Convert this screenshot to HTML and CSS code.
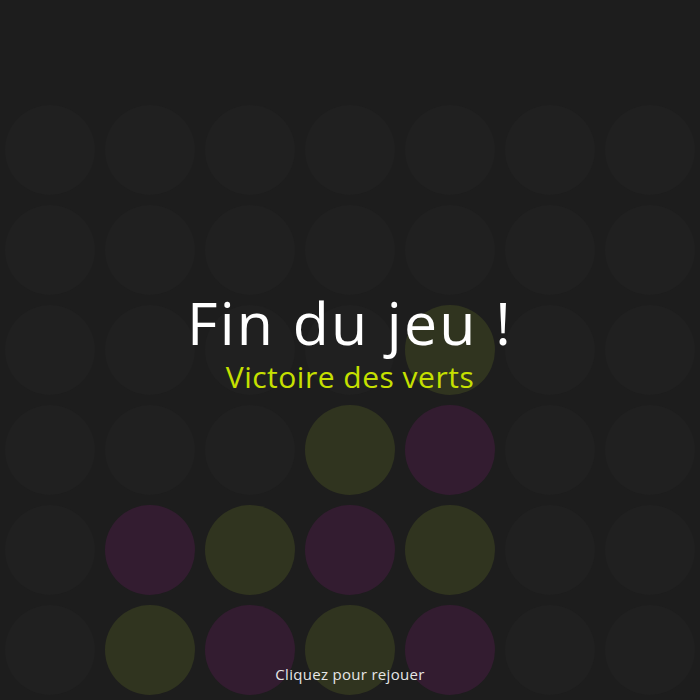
FILE: index.html
```html
<!DOCTYPE html>
<html lang="fr">
<head>
<meta charset="utf-8">
<title>Puissance 4</title>
<link rel="stylesheet" href="styles.css">
</head>
<body>
<div class="screen">
  <div class="board">
    <div class="cell"></div><div class="cell"></div><div class="cell"></div><div class="cell"></div><div class="cell"></div><div class="cell"></div><div class="cell"></div>
    <div class="cell"></div><div class="cell"></div><div class="cell"></div><div class="cell"></div><div class="cell"></div><div class="cell"></div><div class="cell"></div>
    <div class="cell"></div><div class="cell"></div><div class="cell"></div><div class="cell"></div><div class="cell green"></div><div class="cell"></div><div class="cell"></div>
    <div class="cell"></div><div class="cell"></div><div class="cell"></div><div class="cell green"></div><div class="cell purple"></div><div class="cell"></div><div class="cell"></div>
    <div class="cell"></div><div class="cell purple"></div><div class="cell green"></div><div class="cell purple"></div><div class="cell green"></div><div class="cell"></div><div class="cell"></div>
    <div class="cell"></div><div class="cell green"></div><div class="cell purple"></div><div class="cell green"></div><div class="cell purple"></div><div class="cell"></div><div class="cell"></div>
  </div>
  <div class="overlay">
    <h1 class="title">Fin du jeu !</h1>
    <p class="winner">Victoire des verts</p>
    <p class="hint">Cliquez pour rejouer</p>
  </div>
</div>
</body>
</html>
```
FILE: styles.css
```css
html, body {
  margin: 0;
  padding: 0;
  background: #1d1d1d;
}
body {
  font-family: "Open Sans", "DejaVu Sans", sans-serif;
}
.screen {
  position: relative;
  width: 700px;
  height: 700px;
  overflow: hidden;
}
.board {
  padding-top: 100px;
  display: grid;
  grid-template-columns: repeat(7, 100px);
  grid-auto-rows: 100px;
}
.cell {
  margin: 5px;
  width: 90px;
  height: 90px;
  border-radius: 50%;
  background: #202020;
}
.cell.green {
  background: #30341f;
}
.cell.purple {
  background: #331c30;
}
.overlay {
  position: absolute;
  inset: 0;
  display: flex;
  flex-direction: column;
  align-items: center;
  padding-top: 293px;
  padding-bottom: 18px;
  box-sizing: border-box;
}
.title {
  margin: 0;
  font-size: 59px;
  font-weight: normal;
  line-height: 1;
  letter-spacing: 2.2px;
  color: #ffffff;
}
.winner {
  margin: 10px 0 0;
  font-size: 30px;
  line-height: 1;
  letter-spacing: 0.5px;
  color: #c6e000;
}
.hint {
  margin: auto 0 0;
  font-size: 15px;
  line-height: 1;
  letter-spacing: 0.3px;
  color: #e6e6e6;
}
```
